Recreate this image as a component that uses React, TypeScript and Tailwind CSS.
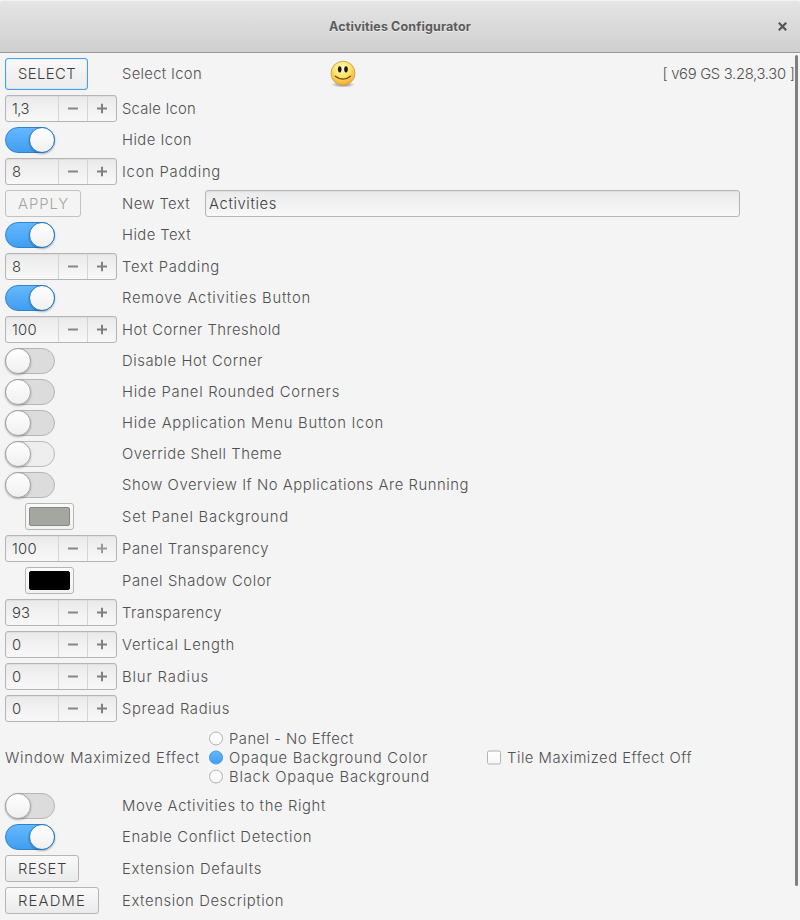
import { useLayoutEffect, useRef, type ReactNode } from "react";

/** Single-line text whose tracking is computed so that it fills the given width. */
function Fit({ text, w, className = "pt-px" }: { text: string; w: number; className?: string }) {
  const ref = useRef<HTMLSpanElement>(null);
  useLayoutEffect(() => {
    const el = ref.current;
    if (!el) return;
    el.style.letterSpacing = "0px";
    const natural = el.getBoundingClientRect().width;
    el.style.letterSpacing = `${(w - natural) / text.length}px`;
  }, [text, w]);
  return (
    <span ref={ref} className={`block w-max whitespace-pre ${className}`}>
      {text}
    </span>
  );
}

function Row({ label, w, children, extra }: { label: string; w: number; children: ReactNode; extra?: ReactNode }) {
  return (
    <div className="flex items-center">
      <div className="flex w-[117px] shrink-0">{children}</div>
      <Fit text={label} w={w} />
      {extra}
    </div>
  );
}

function Spin({ value, w, dim = false }: { value: string; w: number; dim?: boolean }) {
  return (
    <div className="flex h-[27px] w-28 rounded-[3px] border border-[#b5b5b5] bg-gradient-to-b from-[#eaeaea] via-[#f1f1f1] to-[#f8f8f8] shadow-[inset_0_1px_1px_#dedede]">
      <div className="flex w-[52px] items-center pl-[6px] text-[#3c3c3c]">
        <Fit text={value} w={w} />
      </div>
      <div className="flex w-[29px] items-center justify-center border-l border-[#d4d4d4]">
        <div className="h-[2px] w-[10px] -translate-y-[0.5px] bg-[#878787]" />
      </div>
      <div className="flex w-[29px] items-center justify-center border-l border-[#d4d4d4]">
        <svg width="10" height="10" viewBox="0 0 10 10" className="-translate-y-[0.5px]" stroke={dim ? "#9a9a9a" : "#808080"} strokeWidth="2">
          <path d="M0 5H10M5 0V10" />
        </svg>
      </div>
    </div>
  );
}

function Switch({ on = false, pale = false }: { on?: boolean; pale?: boolean }) {
  const track = on
    ? "justify-end border-[#2f82cc] bg-gradient-to-b from-[#64b8ff] to-[#409eef]"
    : pale
      ? "border-[#b9b9b9] bg-[#eeeeee]"
      : "border-[#b5b5b5] bg-[#dcdcdc]";
  const knob = on ? "border-[#2479c6]" : "border-[#a2a2a2]";
  return (
    <div className={`flex h-[26px] w-[50px] rounded-full border ${track}`}>
      <div
        className={`-m-px size-[26px] rounded-full border bg-gradient-to-b from-white to-[#f0f0f0] shadow-[0_1px_2px_rgba(0,0,0,0.3)] ${knob}`}
      />
    </div>
  );
}

function Button({ text, w, className }: { text: string; w: number; className: string }) {
  return (
    <button className={`flex items-center rounded-[3px] border pl-3 ${className}`}>
      <Fit text={text} w={w} />
    </button>
  );
}

function ColorButton({ className }: { className: string }) {
  return (
    <div className="ml-5 flex h-[27px] w-[49px] items-center justify-center rounded-[3px] border border-[#b5b5b5] bg-gradient-to-b from-[#fafafa] to-[#f1f1f1]">
      <div className={`h-[19px] w-[41px] rounded-[2px] border ${className}`} />
    </div>
  );
}

function Radio({ label, w, on = false }: { label: string; w: number; on?: boolean }) {
  return (
    <div className="flex h-[19px] items-center">
      <div
        className={`mr-[6px] size-[14px] -translate-y-[0.5px] rounded-full border ${
          on ? "border-[#3a91df] bg-gradient-to-b from-[#62b6fd] to-[#41a0f1]" : "border-[#b3b3b3] bg-gradient-to-b from-white to-[#f7f7f7]"
        }`}
      />
      <Fit text={label} w={w} />
    </div>
  );
}

function Smiley() {
  return (
    <svg width="26" height="28" viewBox="0 0 26 28">
      <defs>
        <radialGradient id="face" cx="0.45" cy="0.3" r="0.75">
          <stop offset="0" stopColor="#fff9c0" />
          <stop offset="0.45" stopColor="#fde469" />
          <stop offset="0.8" stopColor="#fbbb3a" />
          <stop offset="1" stopColor="#f0a020" />
        </radialGradient>
        <radialGradient id="ground">
          <stop offset="0" stopColor="#000" stopOpacity="0.5" />
          <stop offset="1" stopColor="#000" stopOpacity="0" />
        </radialGradient>
      </defs>
      <ellipse cx="13" cy="24.6" rx="12" ry="3" fill="url(#ground)" />
      <circle cx="13" cy="13.2" r="12" fill="url(#face)" stroke="#c4a558" strokeWidth="0.9" />
      <ellipse cx="9.7" cy="9.3" rx="1.8" ry="3.1" fill="#171717" />
      <ellipse cx="16" cy="9.3" rx="1.8" ry="3.1" fill="#171717" />
      <path d="M5.3 16.2Q13 22.2 20.5 16.2" fill="none" stroke="#6a4a12" strokeWidth="1.3" strokeLinecap="round" />
    </svg>
  );
}

export default function App() {
  return (
    <div className="relative flex h-[920px] w-[800px] flex-col overflow-hidden bg-[#f4f4f4] font-['Inter','Liberation_Sans',sans-serif] text-[14.8px] leading-[19px] font-[350] text-[#505050]">
      <header className="flex h-[53px] items-center rounded-t-[3px] border-t border-b border-t-[#f3f3f3] border-b-[#989898] bg-gradient-to-b from-[#e5e5e5] to-[#cfcfcf]">
        <div className="w-[329px]" />
        <Fit text="Activities Configurator" w={142} className="text-[12.5px] font-bold text-[#5c5c5c] [text-shadow:0_1px_#ececec]" />
        <svg width="9" height="9" viewBox="0 0 9 9" className="ml-[306.5px]" stroke="#555555" strokeWidth="2.2">
          <path d="M0.8 0.8L8.2 8.2M8.2 0.8L0.8 8.2" />
        </svg>
      </header>

      <main className="flex flex-col gap-[5px] pt-[5px] pl-[5px]">
        <Row
          label="Select Icon"
          w={80}
          extra={
            <>
              <div className="ml-[128px] flex h-7 w-[26px]">
                <Smiley />
              </div>
              <Fit text="[ v69 GS 3.28,3.30 ]" w={132} className="ml-[306.5px] pt-px" />
            </>
          }
        >
          <Button
            text="SELECT"
            w={58}
            className="h-8 w-[83px] border-[#45a1ee] bg-gradient-to-b from-[#f9f9f9] to-[#ebebeb] text-[#3c3c3c] shadow-[inset_0_0_1px_#45a1ee]"
          />
        </Row>
        <Row label="Scale Icon" w={74}><Spin value="1,3" w={17} /></Row>
        <Row label="Hide Icon" w={70}><Switch on /></Row>
        <Row label="Icon Padding" w={99}><Spin value="8" w={10} /></Row>
        <Row
          label="New Text"
          w={68}
          extra={
            <div className="ml-[15px] flex h-[27px] w-[535px] items-center rounded-[3px] border border-[#b5b5b5] bg-gradient-to-b from-[#eaeaea] to-[#f8f8f8] pl-[3px] text-[#3c3c3c] shadow-[inset_0_1px_1px_#dedede]">
              <Fit text="Activities" w={68} />
            </div>
          }
        >
          <Button text="APPLY" w={51} className="h-[27px] w-[76px] border-[#c2c2c2] bg-[#f4f4f4] text-[#a4a4a4]" />
        </Row>
        <Row label="Hide Text" w={69}><Switch on /></Row>
        <Row label="Text Padding" w={98}><Spin value="8" w={10} /></Row>
        <Row label="Remove Activities Button" w={189}><Switch on /></Row>
        <Row label="Hot Corner Threshold" w={159}><Spin value="100" w={25} /></Row>
        <Row label="Disable Hot Corner" w={141}><Switch /></Row>
        <Row label="Hide Panel Rounded Corners" w={218}><Switch /></Row>
        <Row label="Hide Application Menu Button Icon" w={262}><Switch /></Row>
        <Row label="Override Shell Theme" w={160}><Switch pale /></Row>
        <Row label="Show Overview If No Applications Are Running" w={347}><Switch /></Row>
        <Row label="Set Panel Background" w={167}><ColorButton className="border-[#858783] bg-[#a4a6a0]" /></Row>
        <Row label="Panel Transparency" w={147}><Spin value="100" w={25} dim /></Row>
        <Row label="Panel Shadow Color" w={150}><ColorButton className="border-black bg-black" /></Row>
        <Row label="Transparency" w={100}><Spin value="93" w={18} /></Row>
        <Row label="Vertical Length" w={113}><Spin value="0" w={10} /></Row>
        <Row label="Blur Radius" w={87}><Spin value="0" w={10} /></Row>
        <Row label="Spread Radius" w={108}><Spin value="0" w={10} /></Row>

        <div className="flex h-[61px] items-center">
          <div className="w-[204px]">
            <Fit text="Window Maximized Effect" w={195} />
          </div>
          <div className="w-[278px]">
            <Radio label="Panel - No Effect" w={125} />
            <Radio label="Opaque Background Color" w={199} on />
            <Radio label="Black Opaque Background" w={201} />
          </div>
          <div className="mr-[6px] size-[14px] -translate-y-[0.5px] rounded-[2px] border border-[#b3b3b3] bg-gradient-to-b from-white to-[#f7f7f7]" />
          <Fit text="Tile Maximized Effect Off" w={185} />
        </div>

        <Row label="Move Activities to the Right" w={204}><Switch /></Row>
        <Row label="Enable Conflict Detection" w={190}><Switch on /></Row>
        <Row label="Extension Defaults" w={140}>
          <Button text="RESET" w={49} className="h-[27px] w-[74px] border-[#b5b5b5] bg-gradient-to-b from-[#f9f9f9] to-[#ebebeb] text-[#3c3c3c]" />
        </Row>
        <Row label="Extension Description" w={162}>
          <Button text="README" w={68} className="h-[27px] w-[94px] border-[#b5b5b5] bg-gradient-to-b from-[#f9f9f9] to-[#ebebeb] text-[#3c3c3c]" />
        </Row>
      </main>

      <div className="absolute top-[55px] right-[2px] h-[831px] w-[3px] rounded-full bg-[#7f7f7f]" />
    </div>
  );
}
